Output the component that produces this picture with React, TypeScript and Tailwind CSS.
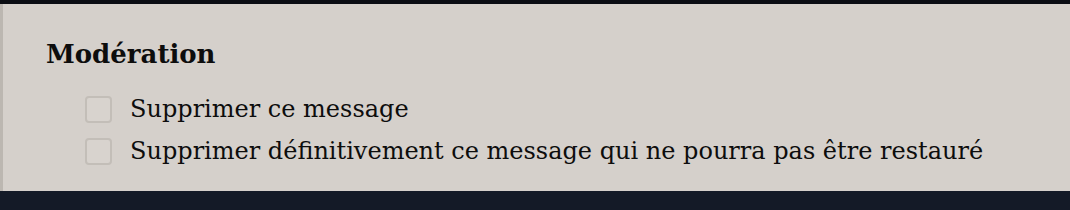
export default function App() {
  const items = [
    "Supprimer ce message",
    "Supprimer définitivement ce message qui ne pourra pas être restauré",
  ];

  return (
    <div className="h-[210px] w-[1070px] bg-[#141a27] flex flex-col">
      <div className="h-[4px] bg-[#0b0d13]" />
      <div
        className="h-[187px] bg-[#d5d0cb] border-l-[3px] border-[#bcb7b1] pl-[43px] pt-[34px] text-[#0d0d0d]"
        style={{ fontFamily: '"DejaVu Serif", "Liberation Serif", serif' }}
      >
        <h2 className="text-[26px] font-bold leading-[32px]">Modération</h2>
        <div className="mt-[25px] pl-[39px] flex flex-col gap-[14px]">
          {items.map((label) => (
            <label key={label} className="flex items-center gap-[18px]">
              <span className="w-[27px] h-[27px] rounded-[4px] border-2 border-[#c3beb8] bg-[#d8d3ce]" />
              <span className="text-[24px] leading-[28px]">{label}</span>
            </label>
          ))}
        </div>
      </div>
    </div>
  );
}
